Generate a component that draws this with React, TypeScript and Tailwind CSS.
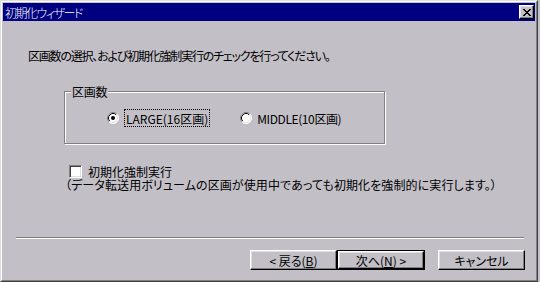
import type React from "react";

const face = "text-[12px] leading-[13px] text-black [font-family:'Noto_Sans_CJK_JP','Noto_Sans',sans-serif] [font-feature-settings:'palt']";

function Radio({ checked }: { checked?: boolean }) {
  return (
    <svg width="12" height="12" viewBox="0 0 12 12" className="shrink-0">
      <circle cx="6" cy="6" r="5.5" fill="#ffffff" />
      <path d="M2.11 9.89 A5.5 5.5 0 0 1 9.89 2.11" fill="none" stroke="#808080" strokeWidth="1" />
      <path d="M9.89 2.11 A5.5 5.5 0 0 1 2.11 9.89" fill="none" stroke="#ffffff" strokeWidth="1" />
      <path d="M2.82 9.18 A4.5 4.5 0 0 1 9.18 2.82" fill="none" stroke="#000000" strokeWidth="1" />
      <path d="M9.18 2.82 A4.5 4.5 0 0 1 2.82 9.18" fill="none" stroke="#dfdfdf" strokeWidth="1" />
      {checked && <circle cx="6" cy="6" r="2" fill="#000000" />}
    </svg>
  );
}

function CloseGlyph() {
  const rows = ["11000011", "01100110", "00111100", "00011000", "00111100", "01100110", "11000011"];
  return (
    <svg width="8" height="7" viewBox="0 0 8 7" shapeRendering="crispEdges">
      {rows.flatMap((r, y) =>
        r.split("").map((c, x) => (c === "1" ? <rect key={`${x}-${y}`} x={x} y={y} width="1" height="1" fill="#000" /> : null)),
      )}
    </svg>
  );
}

function Btn({ children, isDefault }: { children: React.ReactNode; isDefault?: boolean }) {
  const inner = (
    <div className="flex h-full w-full items-center justify-center border border-t-white border-l-white border-r-black border-b-black shadow-[inset_-1px_-1px_0_#808080,inset_1px_1px_0_#dfdfdf]">
      <span className="pt-[1px]">{children}</span>
    </div>
  );
  if (isDefault) {
    return <div className="h-[20px] w-[88px] border border-black">{inner}</div>;
  }
  return <div className="h-[20px] w-[87px]">{inner}</div>;
}

export default function App() {
  return (
    <div className={`h-[282px] w-[540px] overflow-hidden bg-[#c2bfc6] ${face}`}>
      {/* window frame */}
      <div className="h-[282px] w-[538px] border border-t-[#dfdfdf] border-l-[#dfdfdf] border-r-[#404040] border-b-[#404040]">
        <div className="h-full w-full border border-t-white border-l-white border-r-[#808080] border-b-[#808080] p-[1px]">
          {/* title bar */}
          <div className="flex h-[18px] items-center justify-between bg-[#000080] pl-[2px] pr-[1px]">
            <span className="font-light tracking-[-1.5px] text-white">初期化ウィザード</span>
            <div className="flex h-[14px] w-[15px] items-center justify-center border border-t-white border-l-white border-r-black border-b-black bg-[#c2bfc6] shadow-[inset_-1px_-1px_0_#808080,inset_1px_1px_0_#dfdfdf]">
              <CloseGlyph />
            </div>
          </div>

          {/* body */}
          <div className="flex flex-col">
            <p className="ml-[25px] mt-[28px] tracking-[-1.2px]">区画数の選択、および初期化強制実行のチェックを行ってください。</p>

            <div className="relative ml-[61px] mt-[29px] h-[53px] w-[321px] border border-[#808080] shadow-[inset_1px_1px_0_#ffffff,1px_1px_0_#ffffff]">
              <span className="absolute -top-[7px] left-[6px] bg-[#c2bfc6] px-[1px] tracking-[-0.3px]">区画数</span>
              <div className="mt-[17px] flex h-[18px] items-center pl-[42px]">
                <Radio checked />
                <span className="ml-[5px] flex h-[18px] items-center border border-dotted border-black px-[1px]">LARGE(16区画)</span>
                <div className="ml-[30px]">
                  <Radio />
                </div>
                <span className="ml-[5px] tracking-[-0.4px]">MIDDLE(10区画)</span>
              </div>
            </div>

            <div className="ml-[66px] mt-[21px] flex h-[13px] items-center">
              <div className="h-[13px] w-[13px] border border-t-[#808080] border-l-[#808080] border-r-white border-b-white bg-white shadow-[inset_1px_1px_0_#404040,inset_-1px_-1px_0_#dfdfdf]" />
              <span className="ml-[6px]">初期化強制実行</span>
            </div>
            <p className="ml-[62px] tracking-[0.1px]">（データ転送用ボリュームの区画が使用中であっても初期化を強制的に実行します。）</p>

            <div className="ml-[13px] mt-[46px] h-[2px] w-[508px] border-t border-t-[#808080] border-b border-b-white" />

            <div className="ml-[247px] mt-[11px] flex">
              <Btn>
                &lt; 戻る(<span className="underline">B</span>)
              </Btn>
              <Btn isDefault>
                次へ(<span className="underline">N</span>) &gt;
              </Btn>
              <div className="ml-[13px]">
                <Btn>キャンセル</Btn>
              </div>
            </div>
          </div>
        </div>
      </div>
    </div>
  );
}
